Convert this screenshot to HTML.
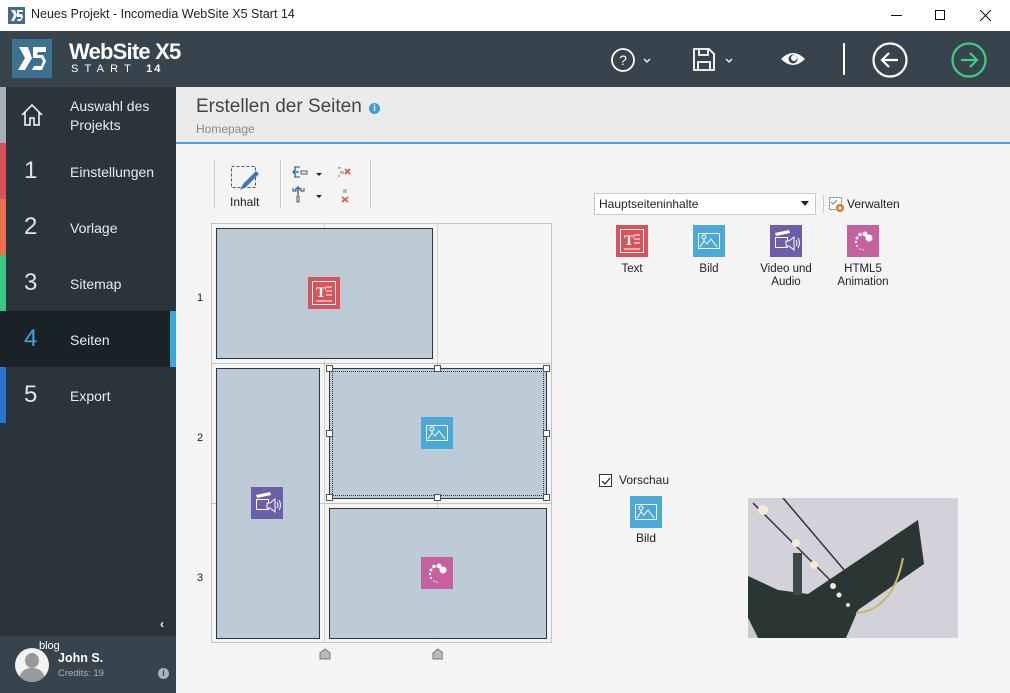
<!DOCTYPE html>
<html><head><meta charset="utf-8"><style>
*{margin:0;padding:0;box-sizing:border-box}
body{width:1010px;height:693px;overflow:hidden;font-family:"Segoe UI","Liberation Sans",sans-serif;background:#f4f4f4;position:relative;color:#222}
.a{position:absolute}
.nav{position:absolute;left:0;width:176px;height:56px;color:#e8ecef;font-size:14px}
.nav .s{position:absolute;left:0;top:0;width:6px;height:56px}
.nav .n{position:absolute;left:24px;top:14px;font-size:24px;font-weight:300;color:#dfe4e8}
.nav .t{position:absolute;left:70px;top:21px}
.cell{position:absolute;background:#bccbd6;border:1.5px solid #2d3740}
.h{position:absolute;width:7px;height:7px;background:#fff;border:1px solid #555}
.ico{position:absolute;width:32px;height:32px}
.lbl{position:absolute;font-size:11.5px;text-align:center;color:#222;line-height:13px}
</style></head><body>
<div class="a" style="left:0;top:0;width:1010px;height:31px;background:#fff"></div>
<svg class="a" style="left:8px;top:7px" width="17" height="17"><rect width="17" height="17" fill="#3d6e8a"/><path d="M3 3h4l2 5-3 6H3l3-6z M9 3h6v2h-4v2h3l1 3-2 4H9l1-2h3v-2h-4z" fill="#fff"/></svg>
<div class="a" style="left:31px;top:7px;font-size:12.5px">Neues Projekt - Incomedia WebSite X5 Start 14</div>
<div class="a" style="left:891px;top:15px;width:11px;height:1px;background:#111"></div>
<div class="a" style="left:935px;top:10px;width:10px;height:10px;border:1px solid #111"></div>
<svg class="a" style="left:980px;top:10px" width="11" height="11"><path d="M0 0L11 11M11 0L0 11" stroke="#111"/></svg>
<div class="a" style="left:0;top:31px;width:1010px;height:56px;background:#37444d"></div>
<svg class="a" style="left:12px;top:39px" width="40" height="39"><rect width="40" height="39" fill="#3d7190"/><path d="M7 8h9l4 11-7 12H6l7-12z M21 8h13v5h-8l-1 3h6l3 6-4 9H20l2-4h7l2-5-2-3h-8z" fill="#fff"/></svg>
<div class="a" style="left:69px;top:39px;color:#fff;font-size:22px;font-weight:bold;letter-spacing:-0.8px">WebSite X5</div>
<div class="a" style="left:71px;top:63px;color:#fff;font-size:11px;letter-spacing:6.2px">START <b style="letter-spacing:2px">14</b></div>
<svg class="a" style="left:610px;top:47px" width="50" height="26"><circle cx="13" cy="13" r="11" fill="none" stroke="#fff" stroke-width="1.8"/><text x="13" y="18" font-size="14" fill="#fff" text-anchor="middle" font-family="Liberation Sans">?</text><path d="M34 12l3 3 3-3" stroke="#fff" fill="none" stroke-width="1.3"/></svg>
<svg class="a" style="left:692px;top:47px" width="46" height="26"><path d="M2 2h15l5 5v16H2z M7 2v6h9V2 M6 23v-8h12v8" stroke="#fff" stroke-width="1.8" fill="none"/><path d="M34 12l3 3 3-3" stroke="#fff" fill="none" stroke-width="1.3"/></svg>
<svg class="a" style="left:780px;top:50px" width="26" height="18"><path d="M1 9Q13-3 25 9Q13 21 1 9z" fill="#fff"/><circle cx="13" cy="9" r="4.5" fill="#37444d"/><circle cx="14" cy="8" r="3" fill="#fff"/></svg>
<div class="a" style="left:843px;top:43px;width:2px;height:32px;background:#fff"></div>
<svg class="a" style="left:871px;top:41px" width="38" height="38"><circle cx="19" cy="19" r="16.5" fill="none" stroke="#fff" stroke-width="2.2"/><path d="M27 19H11M18 12l-7 7 7 7" stroke="#fff" stroke-width="2.2" fill="none"/></svg>
<svg class="a" style="left:950px;top:41px" width="38" height="38"><circle cx="19" cy="19" r="16.5" fill="none" stroke="#3dcf83" stroke-width="2.2"/><path d="M11 19h16M20 12l7 7-7 7" stroke="#3dcf83" stroke-width="2.2" fill="none"/></svg>
<div class="a" style="left:0;top:87px;width:176px;height:606px;background:#2a343b"></div>
<div class="nav" style="top:87px"><div class="s" style="background:#a9afb2"></div>
<svg class="a" style="left:20px;top:16px" width="24" height="24"><path d="M2 12L12 2l10 10M5 9v13h5v-7h4v7h5V9" stroke="#fff" stroke-width="1.5" fill="none"/></svg>
<div class="t" style="top:10px;line-height:19px">Auswahl des<br>Projekts</div></div>
<div class="nav" style="top:143px"><div class="s" style="background:#d9505a"></div><div class="n">1</div><div class="t">Einstellungen</div></div>
<div class="nav" style="top:199px"><div class="s" style="background:#e8704f"></div><div class="n">2</div><div class="t">Vorlage</div></div>
<div class="nav" style="top:255px"><div class="s" style="background:#3ec886"></div><div class="n">3</div><div class="t">Sitemap</div></div>
<div class="nav" style="top:311px;background:#1a2228"><div class="n" style="color:#3ea7dc;font-weight:400">4</div><div class="t">Seiten</div><div class="a" style="left:170px;top:0;width:6px;height:56px;background:#3aa8dc"></div></div>
<div class="nav" style="top:367px"><div class="s" style="background:#2d74cf"></div><div class="n">5</div><div class="t">Export</div></div>
<div class="a" style="left:160px;top:617px;color:#fff;font-size:12px;font-weight:bold">‹</div>
<div class="a" style="left:0;top:636px;width:176px;height:57px;background:#37444d"></div>
<div class="a" style="left:15px;top:648px;width:34px;height:34px;border-radius:50%;background:#f2f2f2;overflow:hidden"><div class="a" style="left:10px;top:5px;width:14px;height:15px;border-radius:50%;background:#999"></div><div class="a" style="left:4px;top:20px;width:26px;height:20px;border-radius:12px 12px 0 0;background:#999"></div></div>
<div class="a" style="left:39px;top:640px;color:#fff;font-size:11px">blog</div>
<div class="a" style="left:58px;top:651px;color:#fff;font-size:12.5px;font-weight:bold">John S.</div>
<div class="a" style="left:58px;top:668px;color:#aab5bd;font-size:9.5px">Credits: 19</div>
<div class="a" style="left:158px;top:668px;width:11px;height:11px;border-radius:50%;background:#aab3ba;color:#37444d;font-size:9px;font-weight:bold;text-align:center;line-height:11px">i</div>
<div class="a" style="left:176px;top:87px;width:834px;height:55px;background:#ebebeb"></div>
<div class="a" style="left:176px;top:142px;width:834px;height:2px;background:#3aa8dc"></div>
<div class="a" style="left:196px;top:96px;font-size:19px;color:#444">Erstellen der Seiten</div>
<div class="a" style="left:369px;top:103px;width:11px;height:11px;border-radius:50%;background:#3b9fd6;color:#fff;font-size:9px;font-weight:bold;text-align:center;line-height:11px">i</div>
<div class="a" style="left:196px;top:122px;font-size:12px;color:#888">Homepage</div>
<div class="a" style="left:214px;top:160px;width:1px;height:48px;background:#ccc"></div>
<div class="a" style="left:280px;top:160px;width:1px;height:48px;background:#ccc"></div>
<div class="a" style="left:370px;top:160px;width:1px;height:48px;background:#ccc"></div>
<svg class="a" style="left:230px;top:165px" width="32" height="28"><rect x="1.5" y="1.5" width="24" height="21" fill="none" stroke="#555" stroke-dasharray="3 2"/><path d="M10 25l3-6 13-13 3 3-13 13z" fill="#3f78b8"/></svg>
<div class="a" style="left:230px;top:195px;font-size:12px">Inhalt</div>
<svg class="a" style="left:292px;top:165px" width="80" height="40"><path d="M2 2h6M2 12h6M3 2v2M3 12v-2" stroke="#444" fill="none"/><path d="M1 7h6M4 4L1 7l3 3" stroke="#2d6fb5" stroke-width="1.5" fill="none"/><path d="M9 6h6v3H9z" fill="none" stroke="#555"/><path d="M24 8l3 3 3-3z" fill="#222"/>
<path d="M48 6h4v3h-4z" fill="#bbb"/><path d="M53 4l5 5M58 4l-5 5" stroke="#d9534f" stroke-width="1.6"/><path d="M46 3h2v-1M46 11h2" stroke="#777" fill="none"/>
<path d="M1 23v3h3v-3M9 23v3h3v-3" stroke="#444" fill="none"/><path d="M6 30v-8M3 25l3-3 3 3" stroke="#2d6fb5" stroke-width="1.5" fill="none"/><path d="M5 31h2v6H5z" fill="none" stroke="#555"/><path d="M24 30l3 3 3-3z" fill="#222"/>
<path d="M51 24h4v4h-4z" fill="#bbb"/><path d="M50 32l6 5M56 32l-6 5" stroke="#d9534f" stroke-width="1.6"/></svg>
<div class="a" style="left:211px;top:223px;width:341px;height:420px;border:1px solid #c3c3c3"></div>
<div class="a" style="left:324px;top:223px;width:1px;height:420px;background:#d3d3d3"></div>
<div class="a" style="left:437px;top:223px;width:1px;height:420px;background:#d3d3d3"></div>
<div class="a" style="left:211px;top:363px;width:341px;height:1px;background:#c3c3c3"></div>
<div class="a" style="left:211px;top:503px;width:341px;height:1px;background:#c3c3c3"></div>
<div class="a" style="left:197px;top:292px;font-size:11px">1</div>
<div class="a" style="left:197px;top:432px;font-size:11px">2</div>
<div class="a" style="left:197px;top:572px;font-size:11px">3</div>
<div class="cell" style="left:216px;top:228px;width:217px;height:131px"></div>
<div class="cell" style="left:216px;top:368px;width:104px;height:271px"></div>
<div class="cell" style="left:329px;top:368px;width:218px;height:131px"><div class="a" style="left:2px;top:2px;right:2px;bottom:2px;border:1px dotted #333"></div></div>
<div class="cell" style="left:329px;top:508px;width:218px;height:131px"></div>
<div class="h" style="left:326px;top:365px"></div><div class="h" style="left:434px;top:365px"></div><div class="h" style="left:543px;top:365px"></div>
<div class="h" style="left:326px;top:430px"></div><div class="h" style="left:543px;top:430px"></div>
<div class="h" style="left:326px;top:494px"></div><div class="h" style="left:434px;top:494px"></div><div class="h" style="left:543px;top:494px"></div>
<svg class="a" style="left:319px;top:648px" width="124" height="12"><path d="M1 11V5l5-4 5 4v6z M114 11V5l5-4 5 4v6z" fill="#bbb" stroke="#777"/></svg>
<svg width="0" height="0" style="position:absolute"><defs>
<g id="T"><rect width="32" height="32" fill="#d9535b"/><rect x="4.5" y="4.5" width="23" height="23" fill="none" stroke="#fff"/><text x="8" y="20" font-family="Liberation Serif" font-weight="bold" font-size="15" fill="#fff">T</text><path d="M18 10h6M18 14h6M18 18h6M8 24h16" stroke="#fff"/></g>
<g id="B"><rect width="32" height="32" fill="#4aa9d6"/><rect x="5.5" y="8.5" width="21" height="15" fill="none" stroke="#fff"/><circle cx="11" cy="12" r="2" fill="none" stroke="#fff"/><path d="M7 22l4-6 3 3 4-5 6 8M11 14v3" stroke="#fff" fill="none"/></g>
<g id="V"><rect width="32" height="32" fill="#6c5ea8"/><path d="M5 8l14-3 1 3-14 3z" fill="#fff"/><path d="M5.5 12.5h12v10h-12z" fill="none" stroke="#fff"/><path d="M16 16h3l5-4v13l-5-4h-3z" fill="#6c5ea8" stroke="#fff"/><path d="M26 15q2 3 0 6M28 13q3 5 0 10" stroke="#fff" fill="none"/></g>
<g id="H"><rect width="32" height="32" fill="#c6619f"/><circle cx="22" cy="13" r="3.5" fill="#fff"/><circle cx="18" cy="9" r="2.5" fill="#fff"/><circle cx="13" cy="9.5" r="1.8" fill="#fff"/><circle cx="10" cy="13" r="1.5" fill="#fff"/><circle cx="9" cy="17" r="1.2" fill="#fff"/><circle cx="10" cy="21" r="1" fill="#fff"/><circle cx="13" cy="24" r=".8" fill="#fff"/><circle cx="16" cy="25" r=".7" fill="#fff"/></g>
</defs></svg>
<svg class="ico" style="left:308px;top:277px"><use href="#T"/></svg>
<svg class="ico" style="left:421px;top:417px"><use href="#B"/></svg>
<svg class="ico" style="left:251px;top:487px"><use href="#V"/></svg>
<svg class="ico" style="left:421px;top:557px"><use href="#H"/></svg>
<div class="a" style="left:594px;top:193px;width:222px;height:22px;border:1px solid #c8c8c8;background:#fff;font-size:12px;padding:3px 4px">Hauptseiteninhalte</div>
<svg class="a" style="left:801px;top:201px" width="8" height="5"><path d="M0 0h8L4 5z" fill="#222"/></svg>
<div class="a" style="left:823px;top:195px;width:1px;height:18px;background:#ccc"></div>
<svg class="a" style="left:828px;top:196px" width="18" height="17"><rect x="1.5" y="1.5" width="12" height="12" fill="#fff" stroke="#777" stroke-dasharray="2 1"/><path d="M3 6l2 2 4-4" stroke="#3a7" fill="none"/><circle cx="12" cy="12" r="4" fill="#e07a2e"/><circle cx="12" cy="12" r="1.5" fill="#fff"/></svg>
<div class="a" style="left:847px;top:197px;font-size:12px">Verwalten</div>
<svg class="ico" style="left:616px;top:225px"><use href="#T"/></svg>
<svg class="ico" style="left:693px;top:225px"><use href="#B"/></svg>
<svg class="ico" style="left:770px;top:225px"><use href="#V"/></svg>
<svg class="ico" style="left:847px;top:225px"><use href="#H"/></svg>
<div class="lbl" style="left:601px;top:263px;width:62px">Text</div>
<div class="lbl" style="left:678px;top:263px;width:62px">Bild</div>
<div class="lbl" style="left:752px;top:263px;width:68px">Video und<br>Audio</div>
<div class="lbl" style="left:829px;top:263px;width:68px">HTML5<br>Animation</div>
<div class="a" style="left:599px;top:474px;width:13px;height:13px;border:1px solid #333;background:#fff"></div>
<svg class="a" style="left:600px;top:475px" width="12" height="12"><path d="M2 6l3 3 5-6" stroke="#222" stroke-width="1.2" fill="none"/></svg>
<div class="a" style="left:619px;top:473px;font-size:12px">Vorschau</div>
<svg class="ico" style="left:630px;top:496px"><use href="#B"/></svg>
<div class="lbl" style="left:616px;top:532px;width:60px;font-size:12px">Bild</div>
<svg class="a" style="left:748px;top:498px" width="210" height="140"><rect width="210" height="140" fill="#d3d1d9"/>
<path d="M0 78L30 92 60 96 170 22 176 66 110 112 98 140H10L0 120z" fill="#2a3634"/>
<path d="M45 55h9v42H45z" fill="#3d4a48"/>
<path d="M0 120L10 140H0z" fill="#c9c7cf"/>
<path d="M5 5L110 110M35 0L120 100" stroke="#333" stroke-width="1.5"/>
<circle cx="15" cy="12" r="5" fill="#f5ecd0"/><circle cx="48" cy="45" r="4" fill="#f5ecd0"/><circle cx="66" cy="67" r="4" fill="#f5ecd0"/><circle cx="85" cy="88" r="3" fill="#f5ecd0"/><circle cx="91" cy="97" r="2.5" fill="#f5ecd0"/><circle cx="100" cy="107" r="2" fill="#f5ecd0"/>
<path d="M108 115Q145 112 155 60" stroke="#c9b86a" stroke-width="2" fill="none"/></svg>
</body></html>
